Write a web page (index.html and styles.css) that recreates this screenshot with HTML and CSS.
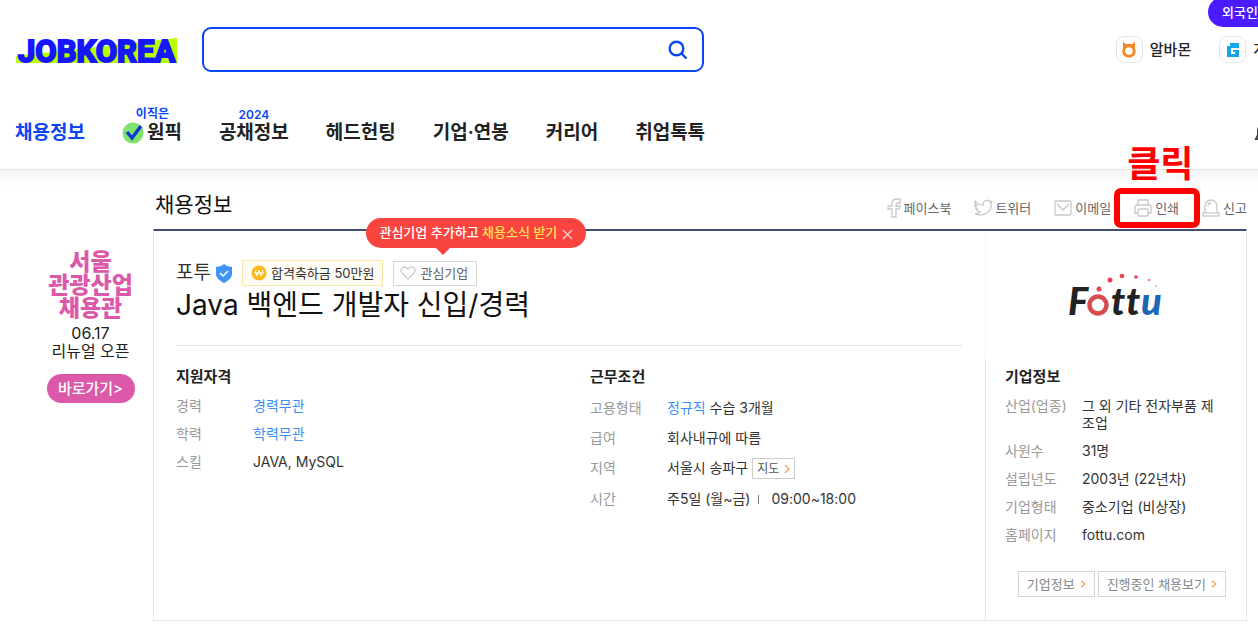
FILE: index.html
```html
<!DOCTYPE html>
<html lang="ko">
<head>
  <meta charset="utf-8">
  <title>Java 백엔드 개발자 신입/경력 - 잡코리아</title>
  <link rel="stylesheet" href="styles.css">
</head>
<body>
  <header class="header">
    <a href="#" class="global-pill">외국인</a>
    <div class="header-top">
      <a href="#" class="logo">
        <svg width="170" height="34" viewBox="0 0 170 34">
          <path d="M1 23L162 5v25H1z" fill="#b9ff00"/>
          <text x="3" y="29" class="logo-text">JOBKOREA</text>
        </svg>
      </a>
      <form class="search">
        <input type="text" class="search-input" aria-label="검색어">
        <button type="button" class="search-btn" aria-label="검색">
          <svg width="20" height="20" viewBox="0 0 20 20" fill="none" stroke="#0a46f5" stroke-width="2.4">
            <circle cx="8.500" cy="8.500" r="6.800"/>
            <path d="M13 13l5.500 5.500"/>
          </svg>
        </button>
      </form>
      <div class="family">
        <a href="#" class="family-link">
          <span class="family-icon">
            <svg width="16" height="16" viewBox="0 0 16 16">
              <path d="M2 0l3 2h6l3-2v6H2z" fill="#f5882a"/>
              <circle cx="8" cy="9" r="5.300" fill="#fff" stroke="#f5882a" stroke-width="3"/>
            </svg>
          </span>
          알바몬
        </a>
        <a href="#" class="family-link">
          <span class="family-icon">
            <svg width="16" height="16" viewBox="0 0 16 16" fill="#12a5e8">
              <path d="M5 1h9v3H5zM2 4h12v2H6v6h4v-2H8V8h6v7H2z"/>
            </svg>
          </span>
          게
        </a>
      </div>
    </div>
    <nav class="nav">
      <a href="#" class="nav-link active">채용정보</a>
      <a href="#" class="nav-link nav-pick">
        <svg width="22" height="22" viewBox="0 0 22 22" fill="none">
          <circle cx="11" cy="11" r="10.500" fill="#7fe36d"/>
          <path d="M5 10l5 6 9-12" stroke="#0b3bd0" stroke-width="3.500"/>
        </svg>
        <span class="nav-word"><small class="nav-tip">이직은</small>원픽</span>
      </a>
      <a href="#" class="nav-link"><span class="nav-word"><small class="nav-tip">2024</small>공채정보</span></a>
      <a href="#" class="nav-link">헤드헌팅</a>
      <a href="#" class="nav-link">기업·연봉</a>
      <a href="#" class="nav-link">커리어</a>
      <a href="#" class="nav-link">취업톡톡</a>
      <button type="button" class="bell" aria-label="알림">
        <svg width="20" height="20" viewBox="0 0 20 20" fill="none" stroke="#444" stroke-width="2">
          <path d="M2 16h16l-2-4V8a6 6 0 00-12 0v4z"/>
        </svg>
      </button>
    </nav>
  </header>

  <div class="page">
    <aside class="banner">
      <strong class="banner-title">서울<br>관광산업<br>채용관</strong>
      <p class="banner-text">06.17<br>리뉴얼 오픈</p>
      <a href="#" class="banner-btn">바로가기&gt;</a>
    </aside>

    <main class="content">
      <div class="content-head">
        <h1 class="content-title">채용정보</h1>
        <div class="share">
          <button type="button" class="share-btn">
            <svg width="14" height="20" viewBox="0 0 14 20">
              <path d="M13 1v4h-2c-2 0-2 1-2 3h4l-1 3H9v8H5v-8H1V8h4V5c0-3 2-4 5-4z"/>
            </svg>
            페이스북
          </button>
          <button type="button" class="share-btn">
            <svg width="18" height="18" viewBox="0 0 18 18">
              <path d="M1 2c2 3 4 4 8 4 0-5 5-6 7-3l2-1-1 3c1 7-6 13-16 10 2 0 4-1 5-2-2 0-3-1-4-3h2C2 9 1 7 1 6l2 1C1 5 0 4 1 2z"/>
            </svg>
            트위터
          </button>
          <button type="button" class="share-btn">
            <svg width="18" height="18" viewBox="0 0 18 18">
              <rect x="1" y="2" width="16" height="14" rx="1"/>
              <path d="M3 5l6 6 6-6"/>
            </svg>
            이메일
          </button>
          <div class="print">
            <button type="button" class="share-btn">
              <svg width="18" height="18" viewBox="0 0 18 18">
                <path d="M4 6V1h10v5M4 14H1V8a2 2 0 012-2h12a2 2 0 012 2v6h-3"/>
                <rect x="4" y="10" width="10" height="7" rx="1"/>
              </svg>
              인쇄
            </button>
            <span class="mark"></span>
            <strong class="mark-label">클릭</strong>
          </div>
          <button type="button" class="share-btn">
            <svg width="18" height="18" viewBox="0 0 18 18">
              <path d="M3 14V7a6 6 0 0112 0v7M6 7c0-2 1-3 3-3"/>
              <rect x="1" y="14" width="16" height="3"/>
            </svg>
            신고
          </button>
        </div>
      </div>

      <div class="card">
        <section class="job">
          <div class="company">
            <span class="company-name">포투</span>
            <svg class="shield" width="18" height="19" viewBox="0 0 18 19" fill="none">
              <path d="M9 0l3 2 5 1v7c0 4-4 7-8 9-4-2-8-5-8-9V3l5-1z" fill="#3f95f7"/>
              <path d="M5 9l3 3 5-5" stroke="#fff" stroke-width="1.5"/>
            </svg>
            <span class="reward">
              <svg width="16" height="16" viewBox="0 0 16 16" fill="none">
                <circle cx="8" cy="8" r="7.500" fill="#fbb91c"/>
                <path d="M4 5l2 6 2-6 2 6 2-6M3 8h10" stroke="#fff"/>
              </svg>
              합격축하금 50만원
            </span>
            <div class="favor">
              <button type="button" class="favor-btn">
                <svg width="16" height="14" viewBox="0 0 16 14" fill="none" stroke="#ccc">
                  <path d="M8 13L2 7C-1 3 4-1.500 8 3c4-4.500 9-.500 6 4z" stroke-width="1.300"/>
                </svg>
                관심기업
              </button>
              <div class="tooltip">
                <span>관심기업 추가하고 <em>채용소식 받기</em></span>
                <button type="button" class="tooltip-close" aria-label="닫기">
                  <svg width="11" height="11" viewBox="0 0 11 11" stroke="#ffc4c0" stroke-width="1.5">
                    <path d="M1 1l9 9M10 1l-9 9"/>
                  </svg>
                </button>
              </div>
            </div>
          </div>
          <h2 class="job-title">Java 백엔드 개발자 신입/경력</h2>

          <div class="job-info">
            <div>
              <h3 class="info-title">지원자격</h3>
              <dl class="info">
                <dt>경력</dt><dd><a href="#">경력무관</a></dd>
                <dt>학력</dt><dd><a href="#">학력무관</a></dd>
                <dt>스킬</dt><dd>JAVA, MySQL</dd>
              </dl>
            </div>
            <div>
              <h3 class="info-title">근무조건</h3>
              <dl class="info info-work">
                <dt>고용형태</dt><dd><a href="#">정규직</a> 수습 3개월</dd>
                <dt>급여</dt><dd>회사내규에 따름</dd>
                <dt>지역</dt>
                <dd class="place">서울시 송파구
                  <button type="button" class="map-btn">지도
                    <svg class="arrow" width="6" height="10" viewBox="0 0 6 10"><path d="M1 1l4 4-4 4"/></svg>
                  </button>
                </dd>
                <dt>시간</dt><dd>주5일 (월~금)<i class="bar"></i>09:00~18:00</dd>
              </dl>
            </div>
          </div>
        </section>

        <aside class="corp">
          <div class="corp-logo">
            <svg width="98" height="48" viewBox="0 0 98 48" role="img" aria-label="Fottu">
              <g class="fottu">
                <text x="1" y="44" fill="#222">F</text>
                <text x="44" y="44" fill="#222">t</text>
                <text x="59" y="44" fill="#222">t</text>
                <text x="74" y="44" fill="#1b69b6">u</text>
              </g>
              <circle cx="31" cy="34" r="8.500" fill="none" stroke="#d84c50" stroke-width="4.500"/>
              <g fill="#ee3f58">
                <circle cx="32" cy="18" r="2.500"/>
                <circle cx="43" cy="9" r="2.500"/>
                <circle cx="55" cy="5" r="2.300"/>
                <circle cx="69" cy="6" r="1.800"/>
                <circle cx="82" cy="9" r="1"/>
                <circle cx="89" cy="15" r=".7"/>
              </g>
            </svg>
          </div>
          <div class="corp-body">
            <h3 class="info-title">기업정보</h3>
            <dl class="info">
              <dt>산업(업종)</dt><dd>그 외 기타 전자부품 제조업</dd>
              <dt>사원수</dt><dd>31명</dd>
              <dt>설립년도</dt><dd>2003년 (22년차)</dd>
              <dt>기업형태</dt><dd>중소기업 (비상장)</dd>
              <dt>홈페이지</dt><dd>fottu.com</dd>
            </dl>
            <div class="corp-btns">
              <a href="#" class="corp-btn">기업정보
                <svg class="arrow" width="6" height="10" viewBox="0 0 6 10"><path d="M1 2l4 3-4 3"/></svg>
              </a>
              <a href="#" class="corp-btn">진행중인 채용보기
                <svg class="arrow" width="6" height="10" viewBox="0 0 6 10"><path d="M1 2l4 3-4 3"/></svg>
              </a>
            </div>
          </div>
        </aside>
      </div>
    </main>
  </div>
</body>
</html>
```
FILE: styles.css
```css
:root {
  --blue: #0a46f5;
  --link: #3c8ff5;
  --pink: #dc59a9;
  --red: #fa443f;
  --line: #e1e5ec;
  --text: #333;
  --muted: #999;
}

* {
  box-sizing: border-box;
}

body {
  margin: 0;
  background: #fff;
  color: var(--text);
  font-family: Inter, "Noto Sans CJK KR", sans-serif;
  font-size: 14px;
  line-height: 17px;
}

a {
  color: inherit;
  text-decoration: none;
}

button {
  padding: 0;
  border: 0;
  background: none;
  color: inherit;
  font: inherit;
  white-space: nowrap;
}

h1, h2, h3, p, dl, dd {
  margin: 0;
}

/* header */
.header {
  position: relative;
  height: 170px;
  padding: 27px 0 0 15px;
  overflow: hidden;
  border-bottom: 1px solid #e5e5e5;
}

.global-pill {
  position: absolute;
  top: -3px;
  right: -14px;
  padding: 0 14px;
  border-radius: 15px;
  background: #4a1bff;
  color: #fff;
  font-size: 13px;
  font-weight: 500;
  line-height: 30px;
}

.header-top {
  display: flex;
  align-items: center;
}

.logo {
  width: 187px;
}

.logo svg {
  display: block;
}

.logo-text {
  font-family: Roboto, sans-serif;
  font-size: 31px;
  font-weight: 700;
  fill: #1616ff;
  stroke: #1616ff;
  stroke-width: 2px;
}

.search {
  display: flex;
  width: 502px;
  height: 45px;
  border: 2px solid var(--blue);
  border-radius: 9px;
}

.search-input {
  flex: 1;
  min-width: 0;
  padding: 0 16px;
  border: 0;
  outline: 0;
  background: none;
  font: inherit;
}

.search-btn {
  display: flex;
  align-items: center;
  margin-right: 14px;
}

.family {
  display: flex;
  gap: 28px;
  margin: 0 -9px 0 auto;
}

.family-link {
  display: flex;
  align-items: center;
  gap: 7px;
  color: #222;
  font-size: 15px;
  font-weight: 500;
}

.family-icon {
  display: flex;
  align-items: center;
  justify-content: center;
  width: 27px;
  height: 27px;
  border: 1px solid #e5e5e5;
  border-radius: 8px;
}

.nav {
  display: flex;
  align-items: center;
  gap: 37px;
  margin-top: 48px;
  color: #222;
  font-size: 19px;
  font-weight: 600;
  line-height: 26px;
}

.nav-link.active {
  color: var(--blue);
}

.nav-pick {
  display: flex;
  align-items: center;
  gap: 3px;
}

.nav-word {
  position: relative;
}

.nav-tip {
  position: absolute;
  top: -14px;
  left: 0;
  right: 0;
  color: var(--blue);
  font-size: 12px;
  line-height: 16px;
  text-align: center;
}

.nav-pick .nav-tip {
  left: -24px;
}

.bell {
  display: flex;
  margin: 0 -16px 0 auto;
}

/* page body */
.page {
  display: grid;
  grid-template-columns: 153px 1fr;
  padding-right: 11px;
  background: linear-gradient(#f5f5f5, #fff 18px);
}

.banner {
  display: flex;
  flex-direction: column;
  align-items: center;
  padding: 81px 0 0 28px;
  text-align: center;
}

.banner-title {
  color: var(--pink);
  font-size: 23px;
  font-weight: 900;
  line-height: 23px;
}

.banner-text {
  margin-top: 4px;
  color: #222;
  font-size: 16px;
  line-height: 18px;
}

.banner-btn {
  width: 88px;
  margin-top: 14px;
  border-radius: 15px;
  background: var(--pink);
  color: #fff;
  font-size: 15px;
  font-weight: 500;
  line-height: 29px;
}

.content-head {
  display: flex;
  align-items: center;
  justify-content: space-between;
  height: 59px;
  padding-top: 11px;
}

.content-title {
  padding-left: 2px;
  color: #111;
  font-size: 21px;
  font-weight: 400;
  line-height: 30px;
}

.share {
  display: flex;
  gap: 23px;
  padding-top: 6px;
}

.share-btn {
  display: flex;
  align-items: center;
  gap: 3px;
  height: 20px;
  color: #666;
  font-size: 13px;
}

.share-btn svg {
  fill: none;
  stroke: #c8c8c8;
  stroke-width: 1.3;
}

.print {
  position: relative;
}

.mark {
  position: absolute;
  top: -10px;
  left: -20px;
  right: -21px;
  bottom: -10px;
  border: 6px solid #f00;
  border-radius: 7px;
}

.mark-label {
  position: absolute;
  bottom: 34px;
  left: -7px;
  color: #f00;
  font-size: 36px;
  line-height: 40px;
  white-space: nowrap;
}

.card {
  display: flex;
  min-height: 392px;
  border: 1px solid var(--line);
  border-top: 2px solid #42506f;
}

.job {
  flex: 1;
  padding: 29px 23px 0 22px;
}

.company {
  display: flex;
  align-items: center;
  height: 26px;
}

.company-name {
  font-size: 19px;
  line-height: 26px;
}

.shield {
  margin: 0 9px 0 4px;
}

.reward,
.favor-btn {
  display: flex;
  align-items: center;
  height: 26px;
  font-size: 13px;
}

.reward {
  gap: 4px;
  padding: 0 8px;
  border: 1px solid #fbe6ab;
  background: #fffcf3;
}

.favor {
  position: relative;
  margin-left: 10px;
}

.favor-btn {
  gap: 4px;
  height: 25px;
  padding: 0 8px 0 6px;
  border: 1px solid #d5d5d5;
  color: #666;
}

.tooltip {
  position: absolute;
  bottom: 38px;
  left: -27px;
  display: flex;
  align-items: center;
  gap: 5px;
  height: 30px;
  padding: 0 13px;
  border-radius: 15px;
  background: var(--red);
  color: #fff;
  font-size: 13px;
  font-weight: 500;
  white-space: nowrap;
}

.tooltip::after {
  content: "";
  position: absolute;
  top: 30px;
  left: 70px;
  border: 7px solid transparent;
  border-top-color: var(--red);
  border-bottom: 0;
}

.tooltip em {
  color: #ffe14d;
  font-style: normal;
}

.tooltip-close {
  display: flex;
  padding-top: 3px;
}

.job-title {
  padding-bottom: 20px;
  border-bottom: 1px solid var(--line);
  color: #111;
  font-size: 28px;
  font-weight: 400;
  line-height: 39px;
}

.job-info {
  display: grid;
  grid-template-columns: 414fr 372fr;
  padding-top: 21px;
}

.info-title {
  margin-bottom: 10px;
  color: #222;
  font-size: 15px;
  font-weight: 600;
  line-height: 20px;
}

.info {
  display: grid;
  grid-template-columns: 77px 1fr;
  row-gap: 11px;
}

.info dt {
  color: var(--muted);
}

.info a {
  color: var(--link);
}

.info-work {
  row-gap: 10px;
  padding-top: 1px;
  line-height: 20px;
}

.place {
  display: flex;
  gap: 4px;
}

.map-btn {
  display: flex;
  align-items: center;
  gap: 5px;
  height: 21px;
  padding: 0 4px;
  border: 1px solid #ccc;
  color: #555;
  font-size: 12px;
}

.arrow {
  fill: none;
  stroke: #f5a04b;
  stroke-width: 1.3;
}

.bar {
  display: inline-block;
  width: 1px;
  height: 9px;
  margin: 0 12px 0 8px;
  background: #777;
}

.corp {
  width: 261px;
}

.corp-logo {
  display: flex;
  align-items: center;
  justify-content: center;
  height: 127px;
  border-left: 1px solid #f4f6f8;
}

.corp-body {
  height: 262px;
  padding: 9px 20px 0 19px;
  border-left: 1px solid var(--line);
}

.fottu {
  font-family: Lato, sans-serif;
  font-size: 38px;
  font-style: italic;
  font-weight: 900;
}

.corp-btns {
  display: flex;
  justify-content: flex-end;
  gap: 3px;
  margin-top: 28px;
}

.corp-btn {
  display: flex;
  align-items: center;
  gap: 5px;
  height: 26px;
  padding: 0 8px;
  border: 1px solid #d5d5d5;
  color: #888;
  font-size: 13px;
}
```
